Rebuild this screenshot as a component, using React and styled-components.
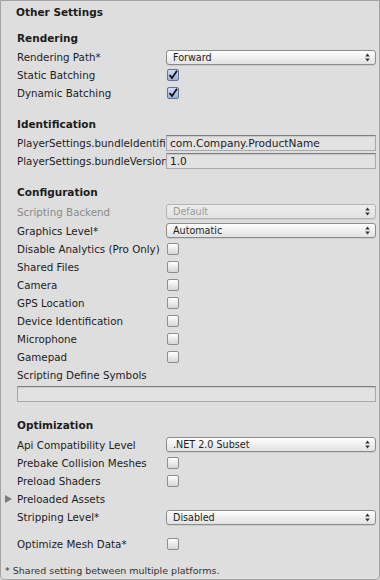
import React from "react"
import styled, { createGlobalStyle } from "styled-components"

const GlobalStyle = createGlobalStyle`
  html, body {
    margin: 0;
    padding: 0;
    background: #dedede;
  }
  body {
    font-family: "DejaVu Sans", "Liberation Sans", sans-serif;
    color: #1c1c1c;
  }
`

const Panel = styled.div`
  width: 380px;
  height: 580px;
  box-sizing: border-box;
  background: #dedede;
  border: 1px solid #a3a3a3;
  border-radius: 0 0 4px 4px;
  padding: 0 3px 0 16px;
  font-size: 10.3px;
  overflow: hidden;
`

const Title = styled.div`
  height: 22px;
  display: flex;
  align-items: center;
  font-weight: bold;
  font-size: 10.5px;
  margin-left: -1px;
`

const Section = styled.div`
  margin-top: ${p => p.$gap}px;
`

const Heading = styled.div`
  height: 21px;
  display: flex;
  align-items: center;
  font-weight: bold;
  font-size: 10.5px;
`

const Row = styled.div`
  display: grid;
  grid-template-columns: 149px 1fr;
  align-items: center;
  height: ${p => p.$h || 18}px;
  margin-top: ${p => p.$mt || 0}px;
`

const Label = styled.div`
  white-space: nowrap;
  overflow: hidden;
  color: ${p => (p.$disabled ? "#8a8a8a" : "#1c1c1c")};
`

const FoldLabel = styled.div`
  display: flex;
  align-items: center;
  margin-left: -12px;
  white-space: nowrap;
`

const Arrow = styled.span`
  width: 0;
  height: 0;
  border-top: 4.5px solid transparent;
  border-bottom: 4.5px solid transparent;
  border-left: 7px solid #7c7c7c;
  margin-right: 5px;
`

const Popup = styled.div`
  height: 15px;
  box-sizing: border-box;
  border: 1px solid ${p => (p.$disabled ? "#b4b4b4" : "#8c8c8c")};
  border-radius: 3px;
  background: ${p =>
    p.$disabled
      ? "linear-gradient(#ededed, #e2e2e2)"
      : "linear-gradient(#ffffff, #ececec 60%, #e2e2e2)"};
  box-shadow: 0 1px 0 rgba(0, 0, 0, 0.08);
  display: flex;
  align-items: center;
  justify-content: space-between;
  padding: 0 5px 0 6px;
  font-size: 9.6px;
  color: ${p => (p.$disabled ? "#9a9a9a" : "#1c1c1c")};
`

const Field = styled.div`
  height: 16px;
  box-sizing: border-box;
  background: #e2e2e2;
  border: 1px solid #a9a9a9;
  border-top-color: #7e7e7e;
  box-shadow: inset 0 1px 1px rgba(0, 0, 0, 0.12);
  display: flex;
  align-items: center;
  padding-left: 3px;
  font-size: 10.6px;
  white-space: nowrap;
  overflow: hidden;
`

const WideField = styled(Field)`
  margin-top: 2px;
`

const Box = styled.div`
  width: 12px;
  height: 12px;
  box-sizing: border-box;
  margin-left: 1px;
  border: 1px solid ${p => (p.$checked ? "#5f7398" : "#8d8d8d")};
  border-radius: 2px;
  background: ${p =>
    p.$checked
      ? "linear-gradient(#cddcf4, #98b2de)"
      : "linear-gradient(#ffffff, #e6e6e6 60%, #d6d6d6)"};
  display: flex;
  align-items: center;
  justify-content: center;
`

const Note = styled.div`
  height: 18px;
  display: flex;
  align-items: center;
  margin-left: -12px;
  margin-top: 8px;
  font-size: 9.5px;
  color: #333;
`

const Stepper = () => (
  <svg width="5" height="9" viewBox="0 0 5 9">
    <path d="M2.5 0.5 L4.8 3.5 H0.2 Z M2.5 8.5 L4.8 5.5 H0.2 Z" fill="#333" />
  </svg>
)

const Check = ({ checked }) => (
  <Box $checked={checked}>
    {checked && (
      <svg width="10" height="10" viewBox="0 0 10 10">
        <path
          d="M1.5 5 L4 8 L9 0.8"
          fill="none"
          stroke="#111"
          strokeWidth="1.8"
        />
      </svg>
    )}
  </Box>
)

const PopupRow = ({ label, value, disabled, h = 19, mt }) => (
  <Row $h={h} $mt={mt}>
    <Label $disabled={disabled}>{label}</Label>
    <Popup $disabled={disabled}>
      <span>{value}</span>
      <Stepper />
    </Popup>
  </Row>
)

const CheckRow = ({ label, checked, mt }) => (
  <Row $mt={mt}>
    <Label>{label}</Label>
    <Check checked={checked} />
  </Row>
)

const TextRow = ({ label, value }) => (
  <Row>
    <Label>{label}</Label>
    <Field>{value}</Field>
  </Row>
)

const configFlags = [
  "Disable Analytics (Pro Only)",
  "Shared Files",
  "Camera",
  "GPS Location",
  "Device Identification",
  "Microphone",
  "Gamepad"
]

export default function App() {
  return (
    <>
      <GlobalStyle />
      <Panel>
        <Title>Other Settings</Title>

        <Section $gap={4}>
          <Heading>Rendering</Heading>
          <PopupRow label="Rendering Path*" value="Forward" h={18} />
          <CheckRow label="Static Batching" checked />
          <CheckRow label="Dynamic Batching" checked />
        </Section>

        <Section $gap={11}>
          <Heading>Identification</Heading>
          <TextRow
            label="PlayerSettings.bundleIdentifier"
            value="com.Company.ProductName"
          />
          <TextRow label="PlayerSettings.bundleVersion" value="1.0" />
        </Section>

        <Section $gap={11}>
          <Heading>Configuration</Heading>
          <PopupRow label="Scripting Backend" value="Default" disabled />
          <PopupRow label="Graphics Level*" value="Automatic" />
          {configFlags.map(f => (
            <CheckRow key={f} label={f} />
          ))}
          <Row>
            <Label>Scripting Define Symbols</Label>
          </Row>
          <WideField />
        </Section>

        <Section $gap={12}>
          <Heading>Optimization</Heading>
          <PopupRow label="Api Compatibility Level" value=".NET 2.0 Subset" />
          <CheckRow label="Prebake Collision Meshes" />
          <CheckRow label="Preload Shaders" />
          <Row>
            <FoldLabel>
              <Arrow />
              Preloaded Assets
            </FoldLabel>
          </Row>
          <PopupRow label="Stripping Level*" value="Disabled" h={18} />
          <CheckRow label="Optimize Mesh Data*" mt={9} />
        </Section>

        <Note>* Shared setting between multiple platforms.</Note>
      </Panel>
    </>
  )
}
